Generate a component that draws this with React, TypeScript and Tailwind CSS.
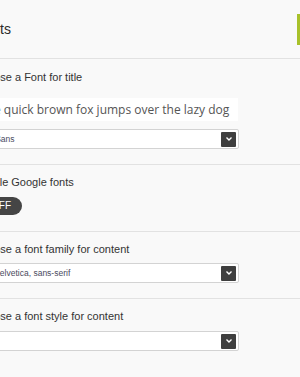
import React from "react";

function Chevron() {
  return (
    <svg width="6" height="4" viewBox="0 0 6 4" className="block">
      <path d="M0.5 0.5 L3 3 L5.5 0.5" fill="none" stroke="#fff" strokeWidth="1.4" />
    </svg>
  );
}

function Select({ value }: { value: string }) {
  return (
    <div className="flex h-[20px] w-[266px] items-center rounded-[2px] border border-[#d3d3d3] bg-white pr-[2px]">
      <span className="-ml-[2px] flex-1 text-[8.5px] leading-none text-[#4a4a5e]">{value}</span>
      <div className="flex h-[15px] w-[15px] items-center justify-center rounded-[1px] bg-[#3e3e3e]">
        <Chevron />
      </div>
    </div>
  );
}

export default function App() {
  return (
    <div
      className="h-[377px] w-[300px] overflow-hidden bg-[#f9f9f9] text-[#333]"
      style={{ fontFamily: '"Liberation Sans", Arial, sans-serif' }}
    >
      <div className="-ml-[27px] w-[354px]">
        <div className="flex h-[59px] items-center border-b border-[#e2e2e2]">
          <div className="flex-1 pl-[3px] text-[14px] leading-none text-[#2b2b2b]">Fonts</div>
          <div className="h-[31px] w-[30px] bg-[#a8c12a]" />
        </div>

        <div className="border-b border-[#e2e2e2] pt-[10px] pb-[15px]">
          <div className="pl-[1px] text-[11px] leading-[16px]">Choose a Font for title</div>
          <div
            className="mt-[13px] flex h-[23px] w-[265px] items-center bg-white pl-[7px] text-[12px] text-[#555]"
            style={{ fontFamily: '"Open Sans", sans-serif' }}
          >
            The quick brown fox jumps over the lazy dog
          </div>
          <div className="mt-[8px]">
            <Select value="Open Sans" />
          </div>
        </div>

        <div className="border-b border-[#e2e2e2] pt-[9px] pb-[16px]">
          <div className="pl-[1px] text-[11px] leading-[16px]">Enable Google fonts</div>
          <div className="mt-[7px] flex h-[18px] w-[49px] items-center justify-end rounded-full bg-[#454545] pr-[11px] text-[10px] leading-none text-white">
            OFF
          </div>
        </div>

        <div className="border-b border-[#e2e2e2] pt-[9px] pb-[15px]">
          <div className="pl-[1px] text-[11px] leading-[16px]">Choose a font family for content</div>
          <div className="mt-[6px]">
            <Select value="Arial, Helvetica, sans-serif" />
          </div>
        </div>

        <div className="pt-[9px]">
          <div className="pl-[1px] text-[11px] leading-[16px]">Choose a font style for content</div>
          <div className="mt-[7px]">
            <Select value="" />
          </div>
        </div>
      </div>
    </div>
  );
}
